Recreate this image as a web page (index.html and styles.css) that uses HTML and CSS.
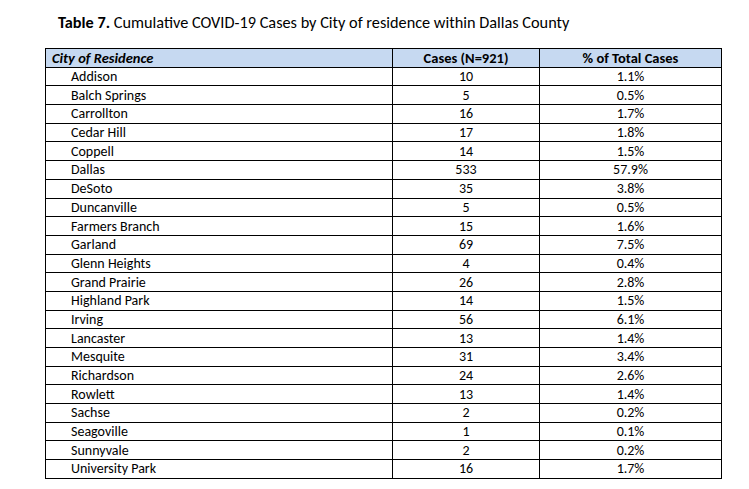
FILE: index.html
```html
<!DOCTYPE html>
<html>
<head>
<meta charset="utf-8">
<link rel="stylesheet" href="styles.css">
</head>
<body>
<div class="page">
  <p class="caption"><b>Table 7.</b> Cumulative COVID-19 Cases by City of residence within Dallas County</p>
  <table class="cases">
    <colgroup>
      <col class="c-city">
      <col class="c-num">
      <col class="c-pct">
    </colgroup>
    <thead>
      <tr><th class="city-h">City of Residence</th><th>Cases (N=921)</th><th>% of Total Cases</th></tr>
    </thead>
    <tbody>
      <tr><td class="city">Addison</td><td>10</td><td>1.1%</td></tr>
      <tr><td class="city">Balch Springs</td><td>5</td><td>0.5%</td></tr>
      <tr><td class="city">Carrollton</td><td>16</td><td>1.7%</td></tr>
      <tr><td class="city">Cedar Hill</td><td>17</td><td>1.8%</td></tr>
      <tr><td class="city">Coppell</td><td>14</td><td>1.5%</td></tr>
      <tr><td class="city">Dallas</td><td>533</td><td>57.9%</td></tr>
      <tr><td class="city">DeSoto</td><td>35</td><td>3.8%</td></tr>
      <tr><td class="city">Duncanville</td><td>5</td><td>0.5%</td></tr>
      <tr><td class="city">Farmers Branch</td><td>15</td><td>1.6%</td></tr>
      <tr><td class="city">Garland</td><td>69</td><td>7.5%</td></tr>
      <tr><td class="city">Glenn Heights</td><td>4</td><td>0.4%</td></tr>
      <tr><td class="city">Grand Prairie</td><td>26</td><td>2.8%</td></tr>
      <tr><td class="city">Highland Park</td><td>14</td><td>1.5%</td></tr>
      <tr><td class="city">Irving</td><td>56</td><td>6.1%</td></tr>
      <tr><td class="city">Lancaster</td><td>13</td><td>1.4%</td></tr>
      <tr><td class="city">Mesquite</td><td>31</td><td>3.4%</td></tr>
      <tr><td class="city">Richardson</td><td>24</td><td>2.6%</td></tr>
      <tr><td class="city">Rowlett</td><td>13</td><td>1.4%</td></tr>
      <tr><td class="city">Sachse</td><td>2</td><td>0.2%</td></tr>
      <tr><td class="city">Seagoville</td><td>1</td><td>0.1%</td></tr>
      <tr><td class="city">Sunnyvale</td><td>2</td><td>0.2%</td></tr>
      <tr><td class="city">University Park</td><td>16</td><td>1.7%</td></tr>
    </tbody>
  </table>
</div>
</body>
</html>
```

FILE: styles.css
```css
html, body {
  margin: 0;
  padding: 0;
  background: #ffffff;
}
body {
  font-family: Carlito, Calibri, Lato, "Noto Sans", sans-serif;
  color: #000000;
}
.page {
  padding: 12px 0 0 45px;
}
.caption {
  margin: 0 0 16px 13px;
  font-size: 16.3px;
  line-height: 20px;
}
.caption b {
  font-weight: 700;
}
.cases {
  border-collapse: collapse;
  table-layout: fixed;
  width: 676px;
  font-size: 14px;
}
.c-city { width: 347px; }
.c-num { width: 147px; }
.c-pct { width: 182px; }
.cases th,
.cases td {
  border: 1px solid #000000;
  height: 16.7px;
  padding: 1px 0 0 0;
  line-height: 16px;
  text-align: center;
  white-space: nowrap;
}
.cases th {
  background: #c6d9f1;
  font-weight: 700;
  font-size: 14.5px;
}
.cases th.city-h {
  text-align: left;
  font-style: italic;
  padding-left: 6px;
}
.cases td.city {
  text-align: left;
  padding-left: 25px;
}
```
